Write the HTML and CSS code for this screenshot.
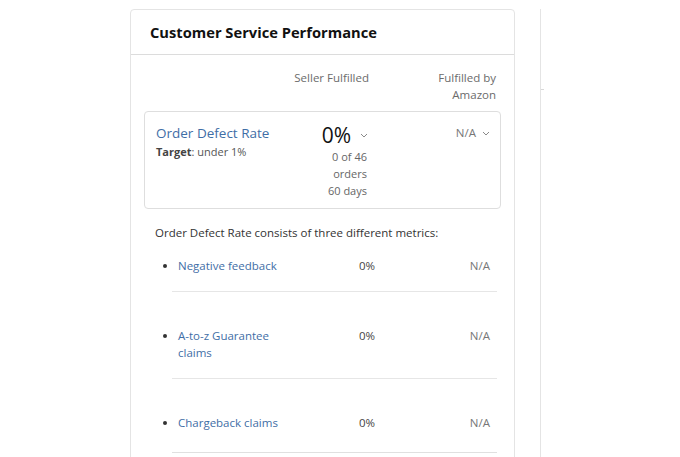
FILE: index.html
```html
<!DOCTYPE html>
<html lang="en">
<head>
<meta charset="utf-8">
<title>Customer Service Performance</title>
<link rel="stylesheet" href="styles.css">
</head>
<body>
<div class="page">
  <section class="card">
    <header class="card-head">
      <h2 class="card-title">Customer Service Performance</h2>
    </header>
    <div class="card-body">
      <div class="col-heads">
        <span></span>
        <span class="col-head">Seller Fulfilled</span>
        <span class="col-head">Fulfilled by<br>Amazon</span>
      </div>

      <div class="odr-box">
        <div class="odr-label">
          <a class="link odr-title" href="#">Order Defect Rate</a>
          <div class="odr-target"><b>Target</b>: under 1%</div>
        </div>
        <div class="odr-seller">
          <div class="odr-value">0%<svg class="chev" viewBox="0 0 8 5" width="8" height="5"><path d="M1 1l3 3 3-3" fill="none" stroke="currentColor" stroke-width="1"/></svg></div>
          <div class="odr-meta">0 of 46<br>orders<br>60 days</div>
        </div>
        <div class="odr-fba">N/A<svg class="chev" viewBox="0 0 8 5" width="8" height="5"><path d="M1 1l3 3 3-3" fill="none" stroke="currentColor" stroke-width="1"/></svg></div>
      </div>

      <p class="intro">Order Defect Rate consists of three different metrics:</p>

      <ul class="metrics">
        <li class="metric first">
          <a class="link metric-name" href="#">Negative feedback</a>
          <span class="metric-val">0%</span>
          <span class="metric-na">N/A</span>
        </li>
        <li class="metric">
          <a class="link metric-name" href="#">A-to-z Guarantee<br>claims</a>
          <span class="metric-val">0%</span>
          <span class="metric-na">N/A</span>
        </li>
        <li class="metric last">
          <a class="link metric-name" href="#">Chargeback claims</a>
          <span class="metric-val">0%</span>
          <span class="metric-na">N/A</span>
        </li>
      </ul>
    </div>
  </section>
  <section class="side-card">
    <span class="side-tick"></span>
  </section>
</div>
</body>
</html>
```

FILE: styles.css
```css
* { box-sizing: border-box; }

html, body {
  margin: 0;
  background: #fff;
  height: 100%;
  overflow: hidden;
}

body {
  font-family: "Open Sans", "Noto Sans", sans-serif;
  color: #333;
}

.page {
  display: flex;
  align-items: flex-start;
  gap: 25px;
  padding: 9px 0 0 130px;
  overflow: hidden;
  height: 100%;
}

.card {
  width: 385px;
  height: 470px;
  border: 1px solid #e4e4e4;
  border-radius: 4px;
  background: #fff;
  flex-shrink: 0;
}

.card-head {
  height: 45px;
  border-bottom: 1px solid #dcdcdc;
  display: flex;
  align-items: center;
  padding-left: 19px;
}

.card-title {
  margin: 0;
  font-size: 14.7px;
  font-weight: 700;
  color: #111;
}

.card-body {
  padding: 14px 13px 0 13px;
}

.col-heads {
  display: grid;
  grid-template-columns: 1fr 130px 127px;
  padding-right: 5px;
  font-size: 11.5px;
  line-height: 17px;
  color: #6b6b6b;
  text-align: right;
}

.odr-box {
  margin-top: 8px;
  height: 98px;
  border: 1px solid #dedede;
  border-radius: 4px;
  display: grid;
  grid-template-columns: max-content 1fr 122px;
  padding: 11px 10px 0 11px;
}

.link {
  color: #3f6ea6;
  text-decoration: none;
}

.odr-title {
  font-size: 13.5px;
  line-height: 20px;
  display: block;
}

.odr-target {
  font-size: 11px;
  line-height: 17px;
  color: #555;
}

.odr-target b { font-weight: 700; color: #444; }

.odr-seller {
  text-align: right;
}

.odr-value {
  font-size: 21px;
  line-height: 24px;
  color: #111;
  display: flex;
  justify-content: flex-end;
  align-items: center;
  gap: 9px;
}

.chev { color: #8a8a8a; }

.odr-meta {
  font-size: 11px;
  line-height: 17px;
  color: #666;
  margin-top: 1px;
  padding-right: 1px;
}

.odr-fba {
  font-size: 11.5px;
  line-height: 20px;
  color: #777;
  display: flex;
  justify-content: flex-end;
  align-items: center;
  gap: 6px;
  align-self: start;
}

.intro {
  margin: 15px 0 0 11px;
  font-size: 11.5px;
  line-height: 17px;
  color: #333;
}

.metrics {
  list-style: none;
  margin: 0;
  padding: 0 4px 0 28px;
}

.metric {
  display: grid;
  grid-template-columns: 1fr 70px 115px;
  padding: 35px 7px 17px 0;
  border-bottom: 1px solid #e6e6e6;
  font-size: 11.5px;
  line-height: 17px;
}

.metric.first { padding-top: 16px; }

.metric.last {
  padding-bottom: 21px;
  border-bottom-color: #e0e0e0;
}

.metric-name {
  padding-left: 6px;
  position: relative;
}

/* list bullet, centred on the first line of the name */
.metric-name::before {
  content: "";
  position: absolute;
  left: -9px;
  top: 7px;
  width: 4px;
  height: 4px;
  border-radius: 50%;
  background: #333;
}

.metric-val {
  text-align: right;
  color: #444;
}

.metric-na {
  text-align: right;
  color: #777;
}

.side-card {
  width: 200px;
  height: 470px;
  border-left: 1px solid #e4e4e4;
  position: relative;
  flex-shrink: 0;
}

.side-tick {
  position: absolute;
  left: 0;
  top: 80px;
  width: 3px;
  height: 1px;
  background: #d8d8d8;
}
```
